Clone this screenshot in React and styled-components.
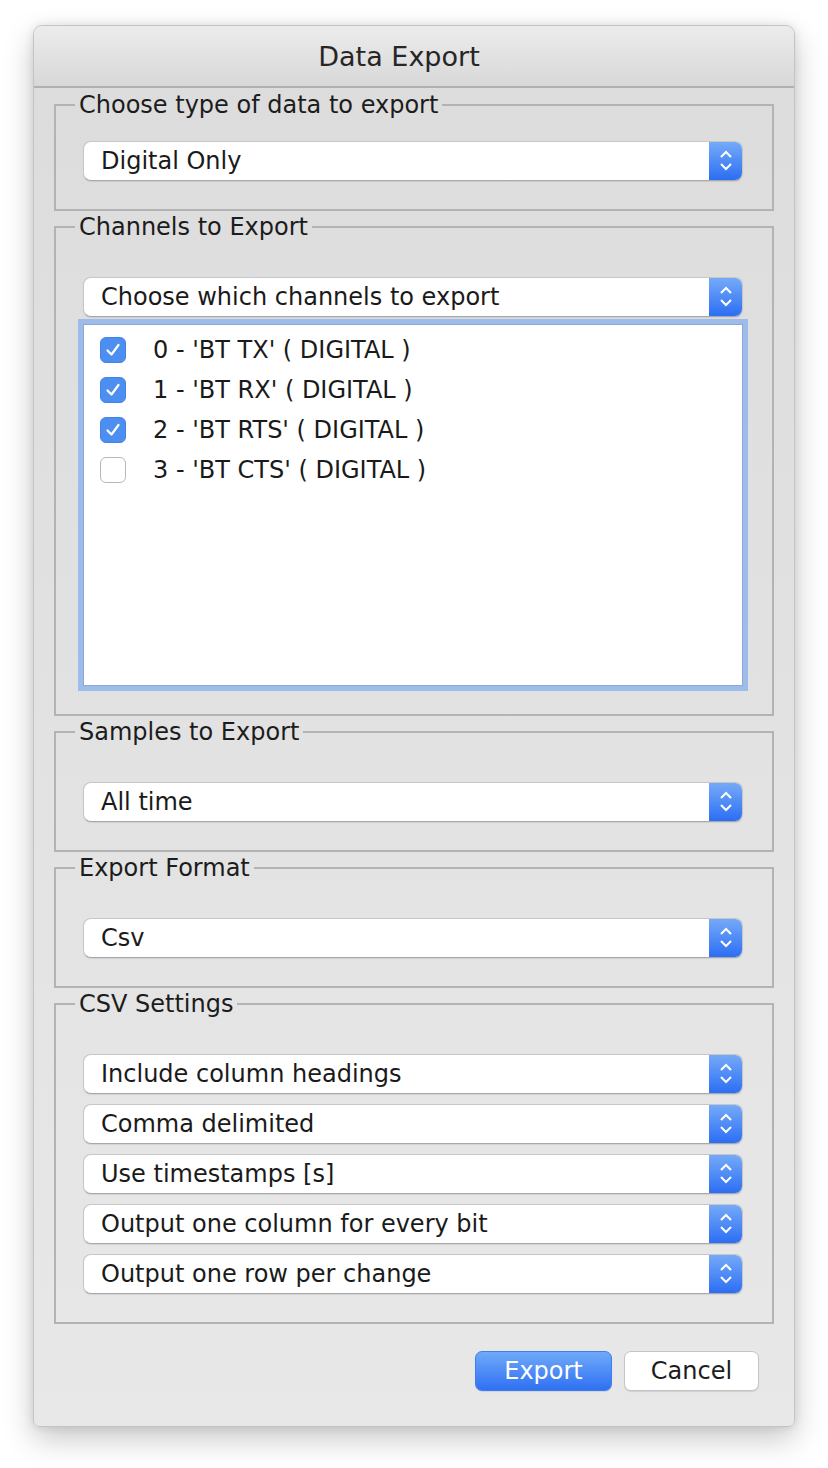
import React from "react";
import styled, { createGlobalStyle } from "styled-components";

const GlobalStyle = createGlobalStyle`
  html, body {
    margin: 0;
    padding: 0;
    background: #ffffff;
  }
  body {
    font-family: "DejaVu Sans", "Liberation Sans", sans-serif;
    color: #1c1c1c;
  }
`;

const Page = styled.div`
  padding: 25px 33px 40px;
  width: 762px;
`;

const Window = styled.div`
  width: 762px;
  box-sizing: border-box;
  border: 1px solid #c4c4c4;
  border-radius: 9px 9px 6px 6px;
  background: linear-gradient(#dcdcdc, #e8e8e8);
  box-shadow: 0 12px 30px rgba(0, 0, 0, 0.22), 0 0 10px rgba(0, 0, 0, 0.1);
  overflow: hidden;
`;

const TitleBar = styled.div`
  height: 60px;
  display: flex;
  align-items: center;
  justify-content: center;
  padding-right: 30px;
  background: linear-gradient(#ececec, #d8d8d8);
  border-bottom: 2px solid #b1b1b1;
  font-size: 27px;
  color: #262626;
`;

const Body = styled.div`
  padding: 3px 20px 35px;
  display: flex;
  flex-direction: column;
  gap: 2px;
`;

const Group = styled.fieldset`
  margin: 0;
  min-inline-size: 0;
  border: 2px solid #b3b3b3;
  padding: ${(p) => (p.$roomy ? "36px" : "22px")} 29px 28px 27px;
  display: flex;
  flex-direction: column;
  gap: ${(p) => (p.$stacked ? "10px" : "0")};
`;

const Legend = styled.legend`
  margin-left: -8px;
  padding: 0 4px;
  font-size: 24px;
  line-height: 28px;
  color: #1c1c1c;
`;

const SelectBox = styled.div`
  height: 40px;
  box-sizing: border-box;
  display: flex;
  align-items: stretch;
  background: #ffffff;
  border: 1px solid #c6c6c6;
  border-bottom-color: #a8a8a8;
  border-radius: 8px;
  overflow: hidden;
  box-shadow: 0 1px 1px rgba(0, 0, 0, 0.08);
`;

const SelectLabel = styled.div`
  flex: 1;
  display: flex;
  align-items: center;
  padding-left: 17px;
  font-size: 24px;
  color: #1a1a1a;
`;

const Stepper = styled.div`
  width: 33px;
  display: flex;
  align-items: center;
  justify-content: center;
  background: linear-gradient(#75aaf8, #2c6ef4);
`;

const ListBox = styled.div`
  margin-top: 7px;
  height: 362px;
  box-sizing: border-box;
  background: #ffffff;
  border: 1px solid #8fa8cc;
  box-shadow: 0 0 0 5px #9cbdeb;
  padding: 5px 0 0 16px;
`;

const Row = styled.div`
  height: 40px;
  display: flex;
  align-items: center;
  gap: 27px;
  font-size: 24px;
  color: #1a1a1a;
`;

const Check = styled.span`
  width: 26px;
  height: 26px;
  box-sizing: border-box;
  border-radius: 6px;
  display: flex;
  align-items: center;
  justify-content: center;
  background: ${(p) => (p.$on ? "#4d8ef1" : "#ffffff")};
  border: 1px solid ${(p) => (p.$on ? "#4283ea" : "#b8b8b8")};
`;

const Buttons = styled.div`
  margin-top: 25px;
  display: flex;
  justify-content: flex-end;
  gap: 12px;
  padding-right: 15px;
`;

const Button = styled.button`
  width: ${(p) => (p.$primary ? "137px" : "135px")};
  height: 40px;
  border-radius: 7px;
  font-family: inherit;
  font-size: 24px;
  padding: 0;
  color: ${(p) => (p.$primary ? "#ffffff" : "#1c1c1c")};
  background: ${(p) =>
    p.$primary ? "linear-gradient(#70a9f8, #2f70f3)" : "#ffffff"};
  border: 1px solid ${(p) => (p.$primary ? "#3d7ef0" : "#c4c4c4")};
  box-shadow: 0 1px 1px rgba(0, 0, 0, 0.1);
`;

const Chevrons = () => (
  <svg width="14" height="24" viewBox="0 0 14 24">
    <polyline points="2,8 7,3 12,8" fill="none" stroke="#fff" strokeWidth="2" />
    <polyline points="2,15 7,20 12,15" fill="none" stroke="#fff" strokeWidth="2" />
  </svg>
);

const Select = ({ children }) => (
  <SelectBox>
    <SelectLabel>{children}</SelectLabel>
    <Stepper>
      <Chevrons />
    </Stepper>
  </SelectBox>
);

const Tick = () => (
  <svg width="16" height="16" viewBox="0 0 16 16">
    <polyline
      points="2.5,8.5 6.5,12.5 13.5,3"
      fill="none"
      stroke="#fff"
      strokeWidth="2.2"
      strokeLinecap="round"
      strokeLinejoin="round"
    />
  </svg>
);

const channels = [
  { label: "0 - 'BT TX' ( DIGITAL )", on: true },
  { label: "1 - 'BT RX' ( DIGITAL )", on: true },
  { label: "2 - 'BT RTS' ( DIGITAL )", on: true },
  { label: "3 - 'BT CTS' ( DIGITAL )", on: false },
];

const csvOptions = [
  "Include column headings",
  "Comma delimited",
  "Use timestamps [s]",
  "Output one column for every bit",
  "Output one row per change",
];

export default function App() {
  return (
    <Page>
      <GlobalStyle />
      <Window>
        <TitleBar>Data Export</TitleBar>
        <Body>
          <Group>
            <Legend>Choose type of data to export</Legend>
            <Select>Digital Only</Select>
          </Group>

          <Group $roomy>
            <Legend>Channels to Export</Legend>
            <Select>Choose which channels to export</Select>
            <ListBox>
              {channels.map((c) => (
                <Row key={c.label}>
                  <Check $on={c.on}>{c.on && <Tick />}</Check>
                  {c.label}
                </Row>
              ))}
            </ListBox>
          </Group>

          <Group $roomy>
            <Legend>Samples to Export</Legend>
            <Select>All time</Select>
          </Group>

          <Group $roomy>
            <Legend>Export Format</Legend>
            <Select>Csv</Select>
          </Group>

          <Group $roomy $stacked>
            <Legend>CSV Settings</Legend>
            {csvOptions.map((o) => (
              <Select key={o}>{o}</Select>
            ))}
          </Group>

          <Buttons>
            <Button $primary>Export</Button>
            <Button>Cancel</Button>
          </Buttons>
        </Body>
      </Window>
    </Page>
  );
}
